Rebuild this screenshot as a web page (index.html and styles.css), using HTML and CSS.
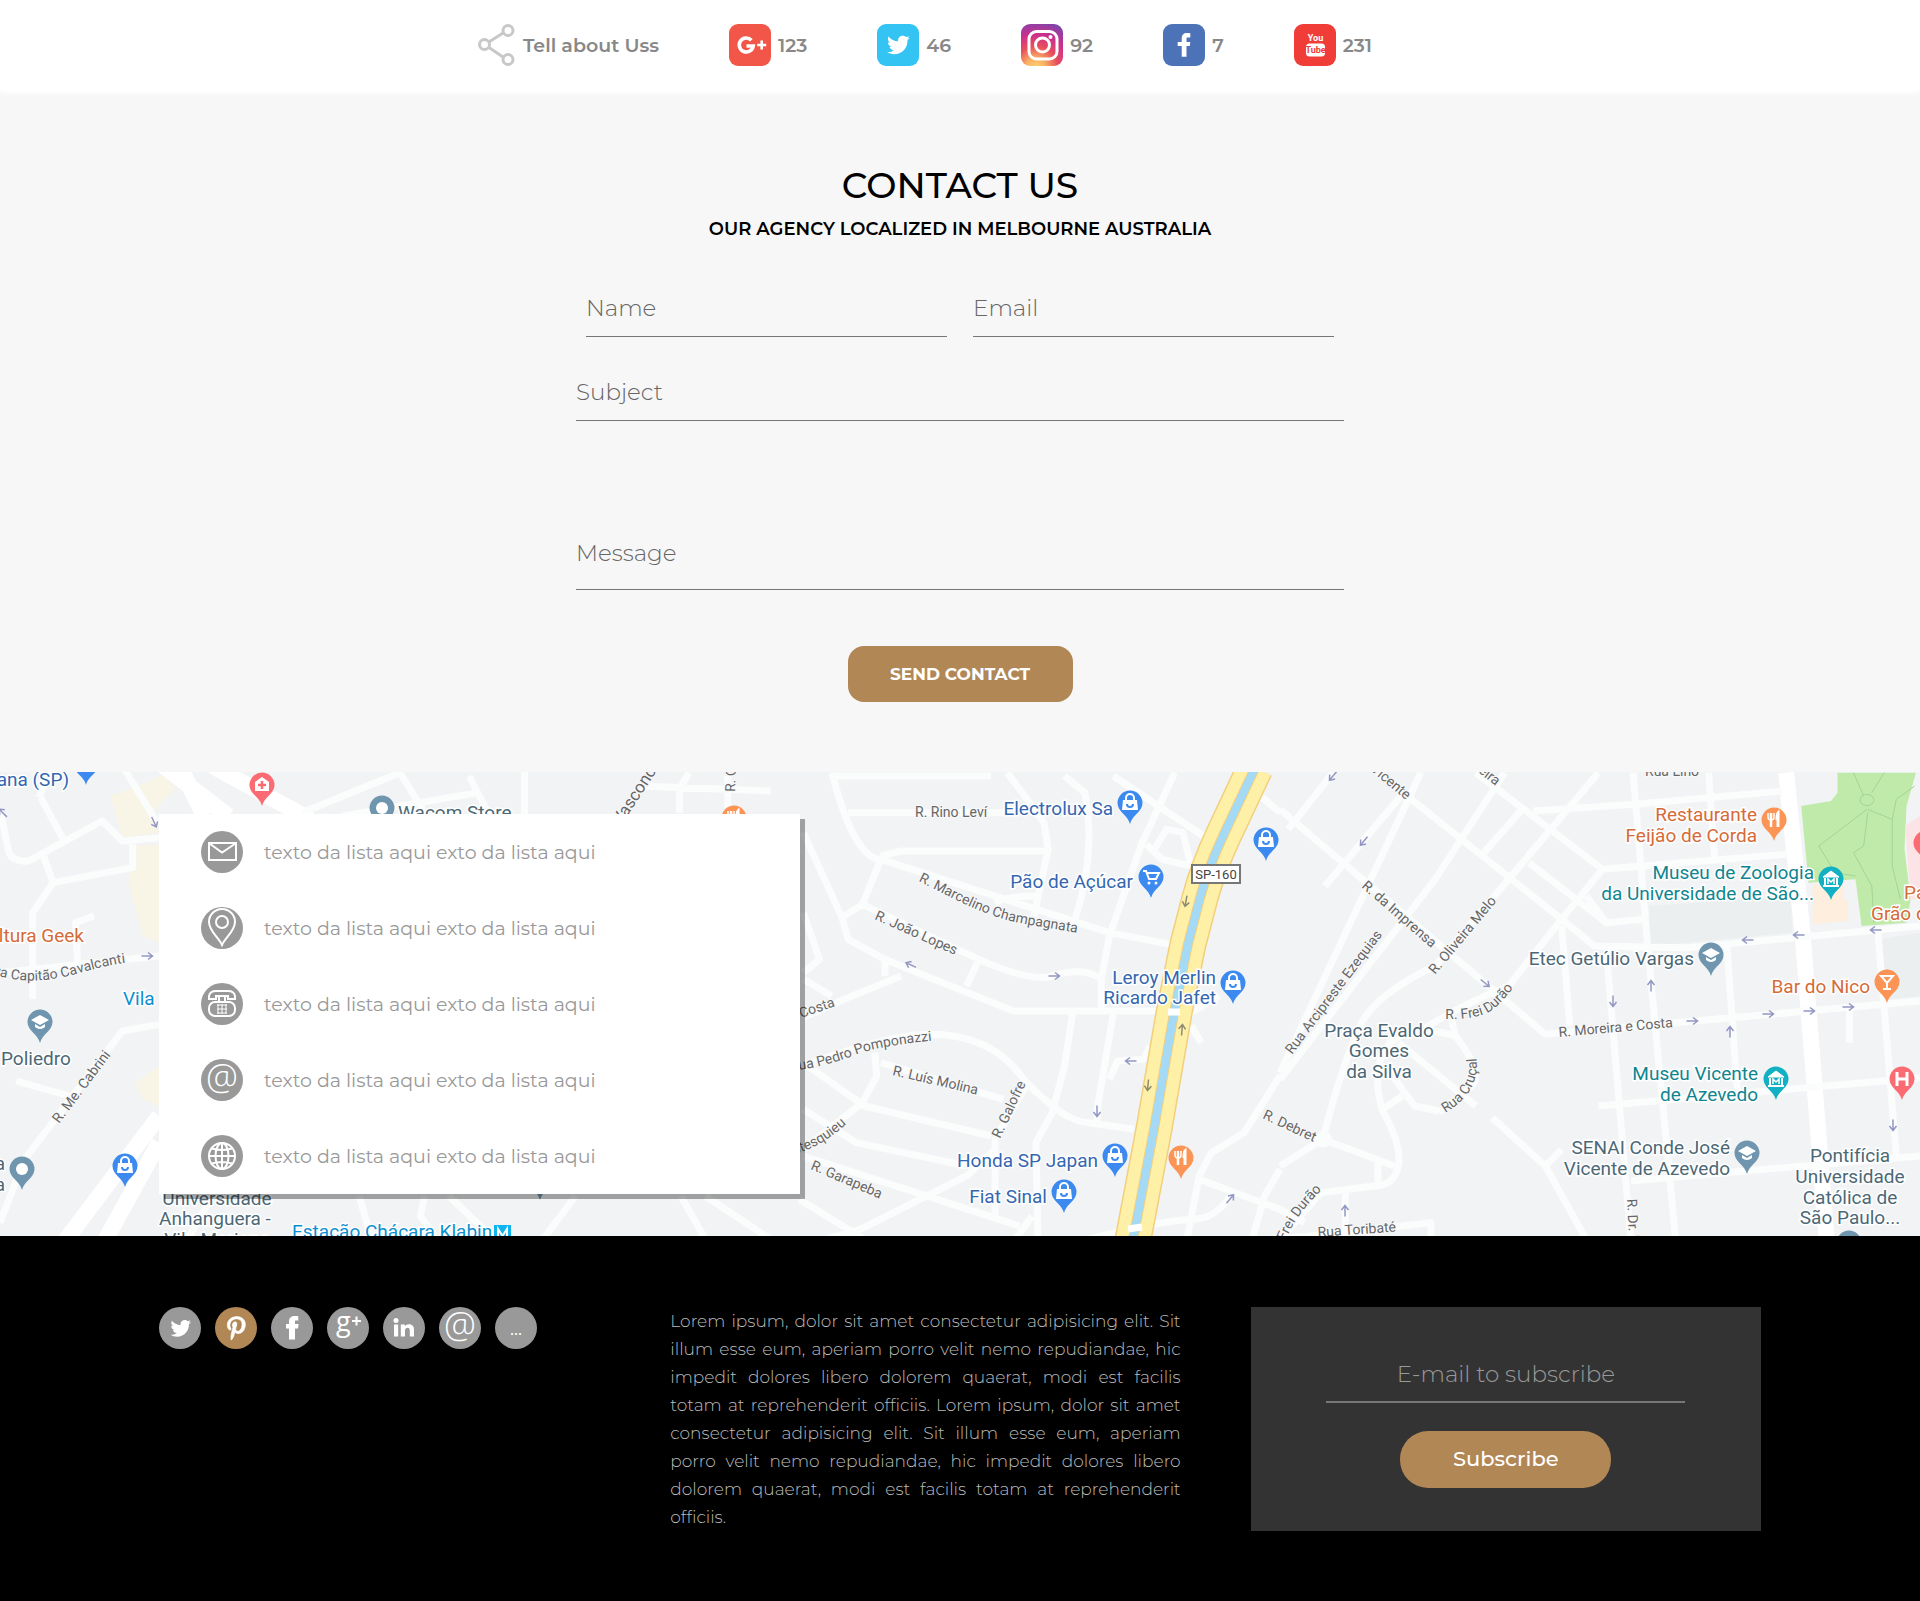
FILE: index.html
```html
<!DOCTYPE html>
<html lang="en">
<head>
<meta charset="utf-8">
<meta name="viewport" content="width=device-width, initial-scale=1">
<title>Contact us</title>
<link rel="stylesheet" href="styles.css">
</head>
<body>
<header class="share-bar">
  <ul class="share-list">
    <li class="share-item share-title">
      <svg class="share-mark" viewBox="0 0 38 42" aria-hidden="true"><path d="M11 18 25 9M11 23.500 25 33"/><circle cx="6.500" cy="20.500" r="5"/><circle cx="30" cy="6.500" r="5"/><circle cx="30" cy="35.500" r="5"/></svg>
      <span>Tell about Uss</span>
    </li>
    <li class="share-item"><a class="share-link" href="#google">
      <svg class="icon" viewBox="0 0 42 42" aria-hidden="true"><rect width="42" height="42" rx="9" fill="#f25648"/><path d="M22.400 16.200A7 7 0 1 0 24.200 22H17.500" fill="none" stroke="#fff" stroke-width="3.600"/><path d="M28.200 21h9M32.700 16.500v9" stroke="#fff" stroke-width="2.600"/></svg>
      <span>123</span></a></li>
    <li class="share-item"><a class="share-link" href="#twitter">
      <svg class="icon" viewBox="0 0 42 42" aria-hidden="true"><rect width="42" height="42" rx="9" fill="#33c4f3"/><path id="bird" transform="translate(10 9.500) scale(.95)" fill="#fff" d="M23.954 4.569c-.885.389-1.830.654-2.825.775 1.014-.611 1.794-1.574 2.163-2.723-.951.555-2.005.959-3.127 1.184-.896-.959-2.173-1.559-3.591-1.559-2.717 0-4.920 2.203-4.920 4.917 0 .39.045.765.127 1.124C7.691 8.094 4.066 6.130 1.640 3.161c-.427.722-.666 1.561-.666 2.475 0 1.710.87 3.213 2.188 4.096-.807-.026-1.566-.248-2.228-.616v.061c0 2.385 1.693 4.374 3.946 4.827-.413.111-.849.171-1.296.171-.314 0-.615-.03-.916-.086.631 1.953 2.445 3.377 4.604 3.417-1.680 1.319-3.809 2.105-6.102 2.105-.39 0-.779-.023-1.170-.067 2.189 1.394 4.768 2.209 7.557 2.209 9.054 0 13.999-7.496 13.999-13.986 0-.209 0-.42-.015-.63.961-.689 1.800-1.560 2.460-2.548z"/></svg>
      <span>46</span></a></li>
    <li class="share-item"><a class="share-link" href="#instagram">
      <svg class="icon" viewBox="0 0 42 42" aria-hidden="true"><defs><radialGradient id="insta" cx=".35" cy="1.050" r="1.150"><stop offset="0" stop-color="#ffd56f"/><stop offset=".2" stop-color="#f9b264"/><stop offset=".45" stop-color="#e8505b"/><stop offset=".7" stop-color="#cc2f8d"/><stop offset="1" stop-color="#7a45ad"/></radialGradient></defs><rect width="42" height="42" rx="9" fill="url(#insta)"/><g fill="none" stroke="#fff" stroke-width="3"><rect x="8" y="7.500" width="28" height="27.500" rx="7.500"/><circle cx="21.500" cy="21" r="7"/></g><circle cx="29.500" cy="13" r="2" fill="#fff"/></svg>
      <span>92</span></a></li>
    <li class="share-item"><a class="share-link" href="#facebook">
      <svg class="icon" viewBox="0 0 42 42" aria-hidden="true"><rect width="42" height="42" rx="9" fill="#4c73b8"/><path fill="#fff" d="M24.500 13.500h2.800V9.300c-.5-.1-1.800-.2-3.300-.2-3.300 0-5.300 2-5.300 5.400V18h-4v4.100h4v10.600h4.800V22.100h3.300l.5-4.100h-3.800v-3c0-1.200.3-1.500 1-1.500z"/></svg>
      <span>7</span></a></li>
    <li class="share-item"><a class="share-link" href="#youtube">
      <svg class="icon" viewBox="0 0 42 42" aria-hidden="true"><rect width="42" height="42" rx="9" fill="#f03d37"/><rect x="12" y="19.500" width="19" height="13" rx="3.500" fill="#fff"/><g class="tube"><text x="21.500" y="17" fill="#fff">You</text><text x="21.500" y="29" fill="#f03d37">Tube</text></g></svg>
      <span>231</span></a></li>
  </ul>
</header>

<main>
  <section class="contact">
    <h1 class="contact-title">CONTACT US</h1>
    <p class="contact-subtitle">OUR AGENCY LOCALIZED IN MELBOURNE AUSTRALIA</p>
    <form class="contact-form">
      <div class="field-pair">
        <input class="field" type="text" aria-label="Name" placeholder="Name">
        <input class="field" type="email" aria-label="Email" placeholder="Email">
      </div>
      <input class="field" type="text" aria-label="Subject" placeholder="Subject">
      <textarea class="field field-message" aria-label="Message" placeholder="Message"></textarea>
      <button class="send-button" type="submit">SEND CONTACT</button>
    </form>
  </section>

  <section class="location">
    <svg class="map" viewBox="0 0 1920 464" preserveAspectRatio="xMidYMid slice" aria-hidden="true">
      <defs>
        <path id="pin" d="M0 21C-2 12-12.500 9-12.500 0A12.500 12.500 0 1 1 12.500 0C12.500 9 2 12 0 21z"/>
        <g id="bag"><path d="M-7-3H7L8 7H-8z" fill="#fff"/><path d="M-4-3v-2a4 4 0 0 1 8 0v2" fill="none" stroke="#fff" stroke-width="2"/><path d="M-3 1a3 3 0 0 0 6 0" fill="none" stroke="#3c8af0" stroke-width="2"/></g>
        <g id="cap"><path d="M0-7 9-2 0 3-9-2z" fill="#fff"/><path d="M-5 2v3q5 4 10 0V2L0 5z" fill="#fff"/></g>
        <g id="fork" stroke="#fff" fill="none"><path d="M-3-7V7" stroke-width="2.500"/><path d="M-6-7v4q0 3 3 3t3-3v-4" stroke-width="1.500"/><path d="M4 7V-7q-1 1-1 7" stroke-width="3"/></g>
        <g id="museum" fill="none" stroke="#fff"><path d="M-8-2 0-8 8-2z" fill="#fff"/><path d="M-6-1V6M6-1V6M-8 7H8" stroke-width="2"/><path d="M-3 5V0L0 3 3 0V5" stroke-width="1.500"/></g>
        <path id="arrow" d="M-5.500 0H5M1-3.500 5.500 0 1 3.500" fill="none" stroke-width="1.500"/>
        <path id="capitao" d="M-8 202Q30 215 76 202T140 190"/>
        <path id="marcelino" d="M918 109C960 130 975 138 1000 146S1050 155 1100 165"/>
        <path id="pedro" d="M799 298Q830 293 855 283T950 267"/>
        <path id="montes" d="M794 382Q828 374 862 336"/>
        <path id="frei" d="M1445 247Q1482 248 1496 235T1524 200"/>
        <path id="cruca" d="M1445 341Q1488 316 1473 270"/>
        <path id="frei2" d="M1280 484Q1292 440 1336 406"/>
      </defs>
      <rect width="1920" height="464" fill="#f1f3f5"/>

      <g class="roads" transform="translate(0 -6) scale(.40816 .33333)">
        <path class="land-sand" d="M270 90 370 45 400 20 430 70 370 140 390 200 300 215zM320 240 390 235V530L350 510 315 350zM330 950 390 900V1020L350 1000z"/>
        <path class="wide" d="M400 0 560 150M520 0 760 160M440 0 500 150M390 1050 150 1440M390 1130 250 1440"/>
        <path d="M300 0 390 180M100 95 155 220M0 130 20 250Q25 290 70 285L250 165 300 225 390 215M105 265 130 350 80 440 80 700M130 350 325 305 325 235M230 450 185 470 190 590M0 620 390 570M40 945 170 990M60 1180 300 795 390 775M60 1180 0 1370M740 140 980 20 1040 140M840 150 1170 80 1200 150M1170 80 1150 30M1285 0V150M130 0 95 95M460 1420 520 1290M880 1290 910 1420M1040 1290 1030 1350 1070 1420M1100 1290 1210 1420M1410 1290 1330 1420"/>
      </g>
      <g class="roads" transform="translate(640 -6) scale(.40816 .33333)">
        <path d="M0 60 320 75M120 20 97 70V140M215 30V130M470 20Q500 160 530 220T590 280L1150 500 1300 535M470 30 860 30M510 140 900 140M900 20 990 170 1000 250 965 450M590 270 640 255 1000 255M1040 30 1090 80Q1120 270 1060 480M1160 30 1380 210M1310 20 1230 230 1150 510 1130 640V740M1240 235 1280 280 1350 300 1330 200 1290 190 1260 250M590 280 545 415 495 455 400 200M495 455 510 520 600 580 700 630 915 735 1300 735M400 440 440 580 400 620M545 415 830 580Q960 650 1010 630 1090 600 1130 640M830 580 800 660M600 570V630M640 630 500 700 400 755M400 640 470 690M1060 740 1040 900 1010 1040 970 1130 975 1420M1160 740 1120 1030 1120 1080M870 410Q900 390 970 390M400 900Q600 810 700 805 860 800 940 940 1040 1070 1100 1070L1210 1090M575 860 580 930 545 1010 400 1150M400 890 550 1020 860 1110M400 1030 530 1130 800 1200M590 890 890 1000M400 1170 930 1380M950 950 870 1120 870 1350M870 1150 800 1230 540 1390 400 1440M390 1300 550 1420M100 1290 160 1420M160 1290 320 1420M920 1420 960 1350M1250 840 1235 880 1170 885 1150 940M1350 780 1375 830M1350 740 1420 690M1568 930 1480 1100 1400 1160 1370 1230 1340 1420M1370 1240 1568 1330M1568 1210 1530 1290 1500 1420M1100 1420Q1250 1370 1350 1360 1410 1360 1446 1290M1520 90 1568 140"/>
      </g>
      <g class="roads" transform="translate(1280 -6) scale(.40816 .33333)">
        <path class="park" d="M1366 20H1558L1535 120 1530 250 1545 400 1535 470 1425 480 1410 340 1295 350 1277 120 1350 105 1366 80z"/>
        <path class="land-pink" d="M1532 180 1568 150V400L1545 400z"/>
        <path class="land-grey" d="M905 420 1250 390 1255 500 905 540zM1475 520 1568 500V690L1485 700z"/>
        <path class="land-museum" d="M1305 355H1380V400H1392V465L1305 475z"/>
        <path class="paths" d="M1405 20 1430 90M1480 20 1450 80M1438 130 1320 240 1360 320 1410 330M1440 130 1500 160 1500 300 1520 400M1440 140 1430 240 1405 260 1450 360 1455 470M1555 60 1510 100 1500 160"/>
        <circle class="paths" cx="1438" cy="102" r="17"/>
        <path class="wide" d="M1240 20 1280 500 1340 1430"/>
        <path d="M0 130 650 805 1568 705M130 20 20 190M300 85 110 360M240 20 690 460 770 540 1000 545 1568 480M345 20 0 920M550 20 380 340 0 940M480 20 790 310 690 460 560 660M600 120 500 260M620 135 870 115 1230 75M780 20 560 340 380 600Q240 680 200 770 150 900 105 1120M790 310 1240 265M865 20 900 530 970 1430M1050 20 1065 280M610 290 800 470 890 460M690 480 710 780M800 560 860 1430M1095 540 1120 970M1465 500 1510 1170M780 1020 1568 935M860 1245 1568 1170M1395 725V830M340 800Q420 730 560 660M420 760 430 810Q500 920 470 960L390 1040M430 810Q320 770 270 830 220 900 250 1030 300 1140 290 1200T230 1260L100 1280 0 1420M290 830 480 1020M270 920 330 1020 390 1035M250 1030 300 990M105 1120 0 1200M105 1120 280 1200M240 1180V1250M160 1270V1420M520 1055 650 1200 750 1420M650 1200 690 1150M0 1420 370 1370V1420M750 390 800 470M0 1330 60 1370"/>
        <circle cx="105" cy="1120" r="14"/>
      </g>

      <g class="highway">
        <path class="verge" d="M1255-4 1224 62Q1208 96 1200 126L1188 172 1174 241 1154 357 1133 468"/>
        <path class="lanes" d="M1255-4 1224 62Q1208 96 1200 126L1188 172 1174 241 1154 357 1133 468"/>
        <path class="median" d="M1255-4 1224 62Q1208 96 1200 126L1188 172 1174 241 1154 357 1133 468"/>
        <path class="river" d="M1255-4 1224 62Q1208 96 1200 126L1188 172 1174 241 1154 357 1133 468"/>
        <path class="bridge" d="M1168 240H1180M1128 457 1142 455"/>
      </g>

      <g class="arrows">
        <use href="#arrow" transform="translate(911 193) rotate(205)"/><use href="#arrow" transform="translate(1054 204)"/><use href="#arrow" transform="translate(1131 289) rotate(180)"/><use href="#arrow" transform="translate(1097 339) rotate(90)"/><use href="#arrow" transform="translate(1230 427) rotate(-50)"/>
        <use href="#arrow" transform="translate(1333 4) rotate(130)"/><use href="#arrow" transform="translate(1364 69) rotate(130)"/><use href="#arrow" transform="translate(1485 211) rotate(40)"/><use href="#arrow" transform="translate(1345 439) rotate(-90)"/><use href="#arrow" transform="translate(1613 229) rotate(90)"/><use href="#arrow" transform="translate(1651 214) rotate(-90)"/><use href="#arrow" transform="translate(1748 168) rotate(180)"/><use href="#arrow" transform="translate(1799 163) rotate(180)"/><use href="#arrow" transform="translate(1876 158) rotate(180)"/><use href="#arrow" transform="translate(1692 249)"/><use href="#arrow" transform="translate(1768 242)"/><use href="#arrow" transform="translate(1809 239)"/><use href="#arrow" transform="translate(1848 235)"/><use href="#arrow" transform="translate(1730 260) rotate(-90)"/><use href="#arrow" transform="translate(1893 353) rotate(90)"/>
        <use href="#arrow" transform="translate(147 184)"/><use href="#arrow" transform="translate(154 50) rotate(65)"/><use href="#arrow" transform="translate(3 41) rotate(225)"/>
        <g class="arrows-dark"><use href="#arrow" transform="translate(1186 129) rotate(100)"/><use href="#arrow" transform="translate(1148 313) rotate(95)"/><use href="#arrow" transform="translate(1182 258) rotate(-85)"/></g>
      </g>

      <g class="streets">
        <text><textPath href="#capitao">ua Capitão Cavalcanti</textPath></text>
        <text transform="translate(59 352) rotate(-53)">R. Me. Cabrini</text>
        <text class="avenue" transform="translate(621 54) rotate(-57)">Vasconcelos</text>
        <text transform="translate(735 20) rotate(-88)">R. Coronel</text>
        <text x="915" y="45">R. Rino Leví</text>
        <text><textPath href="#marcelino">R. Marcelino Champagnata</textPath></text>
        <text transform="translate(874 147) rotate(24)">R. João Lopes</text>
        <text transform="translate(801 246) rotate(-19)">Costa</text>
        <text><textPath href="#pedro">ua Pedro Pomponazzi</textPath></text>
        <text transform="translate(892 303) rotate(13)">R. Luís Molina</text>
        <text transform="translate(1000 367) rotate(-65)">R. Galofre</text>
        <text><textPath href="#montes">ntesquieu</textPath></text>
        <text transform="translate(810 397) rotate(23)">R. Garapeba</text>
        <text transform="translate(1262 346) rotate(25)">R. Debret</text>
        <text transform="translate(1370-2) rotate(40)">Vicente</text>
        <text transform="translate(1474-3) rotate(38)">reira</text>
        <text x="1645" y="4">Rua Lino</text>
        <text transform="translate(1361 115) rotate(41)">R. da Imprensa</text>
        <text transform="translate(1435 203) rotate(-50)">R. Oliveira Melo</text>
        <text transform="translate(1292 283) rotate(-53)">Rua Arcipreste Ezequias</text>
        <text><textPath href="#frei">R. Frei Durão</textPath></text>
        <text transform="translate(1559 265) rotate(-5)">R. Moreira e Costa</text>
        <text><textPath href="#cruca">Rua Cruçal</textPath></text>
        <text transform="translate(1627 427) rotate(87)">R. Dr. Mario</text>
        <text><textPath href="#frei2">R. Frei Durão</textPath></text>
        <text transform="translate(1318 465) rotate(-4)">Rua Toribaté</text>
      </g>

      <g class="places">
        <g class="shop">
          <text x="69" y="14" class="end">ana (SP)</text><use href="#pin" x="86" y="-8"/>
          <text x="1113" y="43" class="end">Electrolux Sa</text>
          <text x="1133" y="116" class="end">Pão de Açúcar</text>
          <text x="1216" y="212" class="end">Leroy Merlin</text><text x="1216" y="232" class="end">Ricardo Jafet</text>
          <text x="1098" y="395" class="end">Honda SP Japan</text>
          <text x="1047" y="431" class="end">Fiat Sinal</text>
          <g><use href="#pin" x="125" y="394"/><use href="#bag" x="125" y="394"/><use href="#pin" x="1130" y="31"/><use href="#bag" x="1130" y="31"/><use href="#pin" x="1266" y="68"/><use href="#bag" x="1266" y="68"/><use href="#pin" x="1233" y="211"/><use href="#bag" x="1233" y="211"/><use href="#pin" x="1115" y="384"/><use href="#bag" x="1115" y="384"/><use href="#pin" x="1064" y="420"/><use href="#bag" x="1064" y="420"/><use href="#pin" x="1151" y="105"/></g>
          <path class="cart" d="M1143 99h3l3 8h7l3-6h-12"/><circle cx="1149" cy="111" r="1.500" fill="#fff"/><circle cx="1156" cy="111" r="1.500" fill="#fff"/>
        </g>
        <g class="food">
          <text x="84" y="170" class="end">ltura Geek</text>
          <text x="1757" y="49" class="end">Restaurante</text><text x="1757" y="70" class="end">Feijão de Corda</text>
          <text x="1870" y="221" class="end">Bar do Nico</text>
          <text x="1904" y="127">Padaria</text><text x="1871" y="148">Grão de Trigo</text>
          <use href="#pin" x="734" y="46"/><use href="#fork" x="734" y="46"/><use href="#pin" x="1181" y="386"/><use href="#fork" x="1181" y="386"/><use href="#pin" x="1774" y="48"/><use href="#fork" x="1774" y="48"/><use href="#pin" x="1887" y="210"/>
          <path d="M1881 204h12l-6 7zM1887 210v6M1883 217h8" fill="none" stroke="#fff" stroke-width="2"/>
        </g>
        <g class="museum">
          <text x="1814" y="107" class="end">Museu de Zoologia</text><text x="1814" y="128" class="end">da Universidade de São...</text>
          <text x="1758" y="308" class="end">Museu Vicente</text><text x="1758" y="329" class="end">de Azevedo</text>
          <use href="#pin" x="1831" y="107"/><use href="#museum" x="1831" y="107"/><use href="#pin" x="1776" y="307"/><use href="#museum" x="1776" y="307"/>
        </g>
        <g class="school">
          <text x="398" y="47">Wacom Store</text>
          <text x="1" y="293">Poliedro</text>
          <text x="5" y="398" class="end">a</text><text x="5" y="419" class="end">a</text>
          <g class="middle"><text x="217" y="433">Universidade</text><text x="215" y="453">Anhanguera -</text><text x="217" y="474">Vila Mariana</text>
          <text x="1379" y="265">Praça Evaldo</text><text x="1379" y="285">Gomes</text><text x="1379" y="306">da Silva</text>
          <text x="1850" y="390">Pontifícia</text><text x="1850" y="411">Universidade</text><text x="1850" y="432">Católica de</text><text x="1850" y="452">São Paulo...</text></g>
          <text x="1694" y="193" class="end">Etec Getúlio Vargas</text>
          <text x="1730" y="382" class="end">SENAI Conde José</text><text x="1730" y="403" class="end">Vicente de Azevedo</text>
          <use href="#pin" x="382" y="36"/><circle cx="382" cy="36" r="6" fill="#fff"/><use href="#pin" x="22" y="397"/><circle cx="22" cy="397" r="6" fill="#fff"/>
          <use href="#pin" x="40" y="250"/><use href="#cap" x="40" y="250"/><use href="#pin" x="1711" y="183"/><use href="#cap" x="1711" y="183"/><use href="#pin" x="1747" y="381"/><use href="#cap" x="1747" y="381"/><use href="#pin" x="540" y="407"/><use href="#pin" x="1849" y="471"/>
        </g>
        <g class="station"><text x="123" y="233">Vila</text><text x="292" y="466">Estação Chácara Klabin</text><rect x="494" y="453" width="17" height="17"/><path d="M498 466v-9l4.500 7 4.500-7v9" fill="none" stroke="#fff" stroke-width="2"/></g>
        <g class="hospital">
          <use href="#pin" x="262" y="13"/><path d="M255 10 262 5 269 10V19H255z" fill="#fff"/><path d="M262 9v8M258 13h8" stroke="#fb6b73" stroke-width="2.500"/>
          <use href="#pin" x="1902" y="307"/><path d="M1897 300v14M1907 300v14M1897 307h10" stroke="#fff" stroke-width="3"/><use href="#pin" x="1926" y="71"/>
        </g>
        <rect class="sign" x="1192" y="93" width="48" height="18"/><text class="sign-text" x="1216" y="107">SP-160</text>
      </g>
    </svg>
    <div class="container">
      <ul class="info-card">
        <li class="info-item"><svg class="icon" viewBox="0 0 42 42" aria-hidden="true"><circle cx="21" cy="21" r="21" fill="#999"/><path d="M8 12h27v17H8zM8.500 12.500 21 21.500 34.500 12.500" fill="none" stroke="#fff" stroke-width="2"/></svg><span>texto da lista aqui exto da lista aqui</span></li>
        <li class="info-item"><svg class="icon" viewBox="0 0 42 42" aria-hidden="true"><circle cx="21" cy="21" r="21" fill="#999"/><path d="M21 38C18 31 8 24 8 15a13 13 0 0 1 26 0C34 24 24 31 21 38z" fill="none" stroke="#fff" stroke-width="2"/><circle cx="21" cy="15" r="6" fill="none" stroke="#fff" stroke-width="2"/></svg><span>texto da lista aqui exto da lista aqui</span></li>
        <li class="info-item"><svg class="icon" viewBox="0 0 42 42" aria-hidden="true"><circle cx="21" cy="21" r="21" fill="#999"/><g fill="none" stroke="#fff" stroke-width="2"><path d="M8 16v-3q1-5 7-5h12q6 0 7 5v3h-7v-3H15v3zM18 18v-5M24 18v-5"/><rect x="8" y="19" width="26" height="14" rx="6"/><path d="M17 21v10M21 21v10M25 21v10M16 22h10M16 26h10M16 30h10" stroke-width="1"/></g></svg><span>texto da lista aqui exto da lista aqui</span></li>
        <li class="info-item"><svg class="icon" viewBox="0 0 42 42" aria-hidden="true"><circle cx="21" cy="21" r="21" fill="#999"/><text class="at" x="21" y="31">@</text></svg><span>texto da lista aqui exto da lista aqui</span></li>
        <li class="info-item"><svg class="icon" viewBox="0 0 42 42" aria-hidden="true"><circle cx="21" cy="21" r="21" fill="#999"/><g fill="none" stroke="#fff" stroke-width="2"><circle cx="21" cy="21" r="13"/><ellipse cx="21" cy="21" rx="6.500" ry="13"/><path d="M21 8v26M8 21h26M11 13.500q10 3 20 0M11 28.500q10-3 20 0"/></g></svg><span>texto da lista aqui exto da lista aqui</span></li>
      </ul>
    </div>
  </section>
</main>

<footer class="footer">
  <div class="container footer-grid">
    <nav class="social" aria-label="Social">
      <a class="social-link" href="#twitter" aria-label="Twitter"><svg class="icon" viewBox="0 0 42 42"><use href="#bird" transform="translate(2.500 2.500) scale(.9)"/></svg></a>
      <a class="social-link social-active" href="#pinterest" aria-label="Pinterest"><svg class="icon" viewBox="0 0 42 42"><path transform="translate(12.300 9.300) scale(.047)" fill="#fff" stroke="#fff" stroke-width="14" d="M204 6.500C101.400 6.500 0 74.900 0 185.600 0 256 39.600 296 63.600 296c9.900 0 15.600-27.600 15.600-35.400 0-9.300-23.700-29.100-23.700-67.800 0-80.400 61.200-137.400 140.400-137.400 68.100 0 118.500 38.700 118.500 109.800 0 53.100-21.300 152.700-90.300 152.700-24.900 0-46.200-18-46.200-43.800 0-37.800 26.400-74.400 26.400-113.400 0-66.200-93.900-54.200-93.900 25.800 0 16.800 2.100 35.400 9.600 50.700-13.800 59.400-42 147.900-42 209.100 0 18.900 2.700 37.500 4.500 56.400 3.400 3.800 1.700 3.400 6.900 1.500 50.400-69 48.600-82.500 71.400-172.800 12.300 23.400 44.100 36 69.300 36 106.200 0 153.900-103.500 153.900-196.800C384 71.300 298.200 6.500 204 6.500z"/></svg></a>
      <a class="social-link" href="#facebook" aria-label="Facebook"><svg class="icon" viewBox="0 0 42 42"><path fill="#fff" d="M24.500 13.500h2.800V9.300c-.5-.1-1.800-.2-3.300-.2-3.900 0-6 2-6 5.400V17h-3v4.500h3v11h6v-11h3l.6-4.500H24v-2.300c0-.9.2-1.200.5-1.200z"/></svg></a>
      <a class="social-link" href="#google" aria-label="Google Plus"><svg class="icon" viewBox="0 0 42 42"><text class="gplus" x="9" y="24">g</text><path d="M25 14h9M29.500 9.500v9" stroke="#fff" stroke-width="2"/></svg></a>
      <a class="social-link" href="#linkedin" aria-label="LinkedIn"><svg class="icon" viewBox="0 0 42 42"><g fill="#fff"><circle cx="13" cy="13.500" r="2.500"/><path d="M11 17.500h4.200v12H11zM17.800 17.500h4v1.700c2-3.200 9.200-3 9.200 3.200v7.100h-4.200v-6.200c0-3.600-4.800-3.200-4.800 0v6.200h-4.200z"/></g></svg></a>
      <a class="social-link" href="#mail" aria-label="Mail"><svg class="icon" viewBox="0 0 42 42"><text class="at" x="21" y="31">@</text></svg></a>
      <a class="social-link" href="#more">...</a>
    </nav>
    <p class="about">Lorem ipsum, dolor sit amet consectetur adipisicing elit. Sit illum esse eum, aperiam porro velit nemo repudiandae, hic impedit dolores libero dolorem quaerat, modi est facilis totam at reprehenderit officiis. Lorem ipsum, dolor sit amet consectetur adipisicing elit. Sit illum esse eum, aperiam porro velit nemo repudiandae, hic impedit dolores libero dolorem quaerat, modi est facilis totam at reprehenderit officiis.</p>
    <form class="subscribe">
      <input class="subscribe-field" type="email" aria-label="E-mail to subscribe" placeholder="E-mail to subscribe">
      <button class="subscribe-button" type="submit">Subscribe</button>
    </form>
  </div>
</footer>
</body>
</html>
```
FILE: styles.css
```css
* { box-sizing: border-box; }

body {
  margin: 0;
  font-family: Montserrat, Inter, "Open Sans", sans-serif;
  color: #000;
  background: #fff;
}

ul { list-style: none; margin: 0; padding: 0; }
h1, p { margin: 0; }
a { color: inherit; text-decoration: none; }
input, textarea, button { font-family: inherit; border-radius: 0; }
.icon { display: block; flex: none; width: 42px; height: 42px; }
.container { width: min(1602px, 92%); margin: 0 auto; }

/* Share bar */
.share-bar {
  position: relative;
  padding: 24px 0 25px;
  background: #fff;
  box-shadow: 0 2px 6px #fff;
}
.share-list { display: flex; justify-content: center; gap: 70px; flex-wrap: wrap; padding-right: 70px; }
.share-item, .share-link {
  display: flex;
  align-items: center;
  gap: 7px;
  font-size: 19px;
  font-weight: 600;
  color: #888;
}
.share-mark { width: 38px; height: 42px; fill: none; stroke: #c8c8c8; stroke-width: 3; }
.tube { font: bold 9px "Liberation Sans Narrow", Roboto, sans-serif; text-anchor: middle; }

/* Contact form */
.contact {
  display: flex;
  flex-direction: column;
  align-items: center;
  padding: 72px 0 70px;
  background: #f7f7f7;
}
.contact-title { font-size: 36px; line-height: 44px; font-weight: 500; }
.contact-subtitle { margin-top: 8px; font-size: 18px; line-height: 28px; font-weight: 600; text-align: center; }
.contact-form {
  display: flex;
  flex-direction: column;
  gap: 28px;
  width: 40%;
  min-width: 320px;
  margin-top: 38px;
}
.field-pair { display: grid; grid-template-columns: 1fr 1fr; gap: 26px; padding: 0 10px; }
.field {
  display: block;
  width: 100%;
  height: 56px;
  padding: 0 0 2px;
  border: 0;
  border-bottom: 1px solid #777;
  background: transparent;
  font-size: 23px;
  line-height: 28px;
  font-weight: 300;
  outline: 0;
}
.field::placeholder { color: #666; opacity: 1; }
.field-message { height: 141px; padding: 90px 0 22px; resize: none; overflow: hidden; }
.send-button {
  align-self: center;
  width: 225px;
  height: 56px;
  margin-top: 28px;
  border: 0;
  border-radius: 16px;
  background: #b18755;
  color: #fff;
  font-size: 17px;
  font-weight: 700;
}

/* Map with the info card over it */
.location { position: relative; padding: 42px 0; overflow: hidden; background: #f1f3f5; }
.map { position: absolute; inset: 0; width: 100%; height: 100%; font-family: Roboto, sans-serif; }
.roads path, .roads circle { fill: none; stroke: #fbfcfc; stroke-width: 7; vector-effect: non-scaling-stroke; stroke-linejoin: round; }
.roads .wide { stroke: #fff; stroke-width: 16; }
.roads .park { fill: #bfeaaa; stroke: none; }
.roads .land-pink { fill: #fbe3e6; stroke: none; }
.roads .land-grey { fill: #ebeff0; stroke: none; }
.roads .land-sand { fill: #f8f4e6; stroke: none; }
.roads .land-museum { fill: #fdeedd; stroke: none; }
.roads .paths { stroke: #a5d494; stroke-width: 1; }
.highway path { fill: none; stroke-linejoin: round; }
.highway .verge { stroke: #f3cf7c; stroke-width: 37; }
.highway .lanes { stroke: #fff0a8; stroke-width: 34; }
.highway .median { stroke: #f3cf7c; stroke-width: 10; }
.highway .river { stroke: #a5daf7; stroke-width: 8; }
.highway .bridge { stroke: #fff; stroke-width: 7; }
.arrows { stroke: #9297c4; }
.arrows-dark { stroke: #8d8b70; }
.streets { font-size: 14px; fill: #666; stroke: #f8f9fa; stroke-width: 2; paint-order: stroke; }
.streets .avenue { font-size: 17px; }
.places { font-size: 19px; }
.places text { stroke: #fff; stroke-width: 3; paint-order: stroke; }
.places .end { text-anchor: end; }
.places .middle { text-anchor: middle; }
.shop text { fill: #3567b0; }
.shop use { fill: #3c8af0; }
.shop .cart { fill: none; stroke: #fff; stroke-width: 2; }
.food text { fill: #d56b38; }
.food use { fill: #fb9455; }
.museum text { fill: #0f858f; }
.museum use { fill: #12b0c3; }
.school text { fill: #4c6876; }
.school use { fill: #6f96ae; }
.station text { fill: #0c8fd0; }
.station rect { fill: #10b4ee; }
.hospital use { fill: #fb6b73; }
.sign { fill: #fff; stroke: #777; stroke-width: 2; }
.places .sign-text { font-size: 13px; text-anchor: middle; fill: #444; }

.info-card {
  position: relative;
  display: flex;
  flex-direction: column;
  gap: 34px;
  width: 40%;
  min-width: 320px;
  padding: 17px 42px;
  background: #fff;
  box-shadow: 5px 5px 0 rgba(0, 0, 0, .34);
}
.info-item { display: flex; align-items: center; gap: 21px; font-size: 19px; color: #999; }
.at { font: 300 36px "Open Sans", sans-serif; text-anchor: middle; fill: #fff; }
.gplus { font: 27px "Open Sans", sans-serif; fill: #fff; }

/* Footer */
.footer { padding: 71px 0; background: #000; }
.footer-grid { display: grid; grid-template-columns: 441fr 510fr 510fr; gap: 70px; align-items: start; }
.social { display: flex; flex-wrap: wrap; gap: 14px; }
.social-link {
  display: flex;
  align-items: center;
  justify-content: center;
  width: 42px;
  height: 42px;
  border-radius: 50%;
  background: #999;
  color: #fff;
  font-size: 19px;
}
.social-active { background: #b18755; }
.about { font-size: 17px; line-height: 28px; font-weight: 300; text-align: justify; color: #bbb; }
.subscribe {
  display: flex;
  flex-direction: column;
  align-items: center;
  gap: 28px;
  padding: 40px 16px 43px;
  background: #333;
}
.subscribe-field {
  width: 75%;
  height: 56px;
  padding: 0;
  border: 0;
  border-bottom: 2px solid #777;
  background: transparent;
  color: #fff;
  font-size: 23px;
  font-weight: 300;
  text-align: center;
  outline: 0;
}
.subscribe-field::placeholder { color: #999; opacity: 1; }
.subscribe-button {
  width: 211px;
  height: 57px;
  padding-bottom: 3px;
  border: 0;
  border-radius: 28px;
  background: #b18755;
  color: #fff;
  font-size: 21px;
  font-weight: 500;
}
```
